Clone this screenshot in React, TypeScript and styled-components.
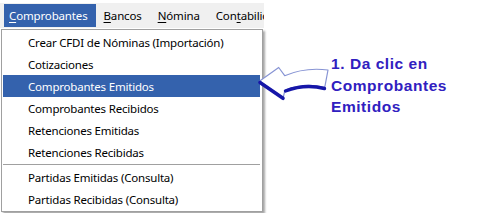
import React from "react";
import styled, { createGlobalStyle } from "styled-components";

const GlobalStyle = createGlobalStyle`
  html, body { margin: 0; padding: 0; background: #ffffff; }
  * { box-sizing: border-box; }
`;

const Page = styled.div`
  position: relative;
  display: flex;
  width: 480px;
  height: 213px;
  overflow: hidden;
  background: #ffffff;
  font-family: "Noto Sans", "Open Sans", sans-serif;
`;

const LeftColumn = styled.div`
  width: 264px;
  display: flex;
  flex-direction: column;
`;

const MenuBar = styled.div`
  margin-top: 3px;
  height: 25px;
  background: #f0f0f0;
  display: flex;
  align-items: stretch;
  padding: 1px 0 1px 4px;
  overflow: hidden;
  white-space: nowrap;
`;

const MenuTitle = styled.div<{ $active?: boolean }>`
  display: flex;
  align-items: center;
  padding: 0 8px 0 5px;
  font-size: 11.5px;
  letter-spacing: -0.15px;
  color: ${(p) => (p.$active ? "#ffffff" : "#000000")};
  background: ${(p) => (p.$active ? "#3462ad" : "transparent")};
  & + & {
    padding-left: 8px;
  }
`;

const Key = styled.span`
  text-decoration: underline;
  text-underline-offset: 2px;
`;

const Dropdown = styled.div`
  margin-top: 1px;
  margin-left: 1px;
  width: 262px;
  border: 1px solid #a0a0a0;
  background: #ffffff;
  padding: 1px 2px 1px 1px;
  box-shadow: 2px 2px 2px rgba(0, 0, 0, 0.35);
  display: flex;
  flex-direction: column;
`;

const Item = styled.div<{ $active?: boolean }>`
  height: 22px;
  display: flex;
  align-items: center;
  padding-left: 25px;
  font-size: 11.5px;
  letter-spacing: -0.2px;
  white-space: nowrap;
  color: ${(p) => (p.$active ? "#ffffff" : "#000000")};
  background: ${(p) => (p.$active ? "#3462ad" : "transparent")};
`;

const Separator = styled.div`
  height: 3px;
  display: flex;
  align-items: center;
  &::after {
    content: "";
    display: block;
    width: 100%;
    height: 1px;
    background: #a0a0a0;
  }
`;

const Annotation = styled.div`
  flex: 1;
  padding: 53px 0 0 67px;
  font-family: "Liberation Sans", Arial, sans-serif;
  font-weight: bold;
  font-size: 15.5px;
  letter-spacing: 0.55px;
  line-height: 21.7px;
  color: #3020c0;
`;

const ArrowSvg = styled.svg`
  position: absolute;
  left: 255px;
  top: 55px;
  overflow: visible;
`;

const items = [
  "Crear CFDI de Nóminas (Importación)",
  "Cotizaciones",
  "Comprobantes Emitidos",
  "Comprobantes Recibidos",
  "Retenciones Emitidas",
  "Retenciones Recibidas",
];

const items2 = ["Partidas Emitidas (Consulta)", "Partidas Recibidas (Consulta)"];

export default function App() {
  return (
    <>
      <GlobalStyle />
      <Page>
        <LeftColumn>
          <MenuBar>
            <MenuTitle $active>
              <span>
                <Key>C</Key>omprobantes
              </span>
            </MenuTitle>
            <MenuTitle>
              <span>
                <Key>B</Key>ancos
              </span>
            </MenuTitle>
            <MenuTitle>
              <span>
                <Key>N</Key>ómina
              </span>
            </MenuTitle>
            <MenuTitle>
              <span>
                Con<Key>t</Key>abilidad
              </span>
            </MenuTitle>
          </MenuBar>
          <Dropdown>
            {items.map((t) => (
              <Item key={t} $active={t === "Comprobantes Emitidos"}>
                {t}
              </Item>
            ))}
            <Separator />
            {items2.map((t) => (
              <Item key={t}>{t}</Item>
            ))}
          </Dropdown>
        </LeftColumn>
        <Annotation>
          1. Da clic en
          <br />
          Comprobantes
          <br />
          Emitidos
        </Annotation>
        <ArrowSvg width="80" height="50" viewBox="0 0 80 50">
          <path
            d="M4.7,26 L23.7,12.5 L29.7,20.7 Q50,12 73,15 L69.7,32.7 Q50,27 30,35 L28,43.3 Z"
            fill="#ffffff"
            stroke="#8794d4"
            strokeWidth="1.2"
            strokeLinejoin="round"
          />
          <path
            d="M5,27.5 L28,43.3"
            fill="none"
            stroke="#1616a8"
            strokeWidth="3.6"
            strokeLinecap="round"
          />
          <path
            d="M30.5,36 Q50,28.5 69.5,33.5"
            fill="none"
            stroke="#1616a8"
            strokeWidth="3.4"
            strokeLinecap="round"
          />
        </ArrowSvg>
      </Page>
    </>
  );
}
